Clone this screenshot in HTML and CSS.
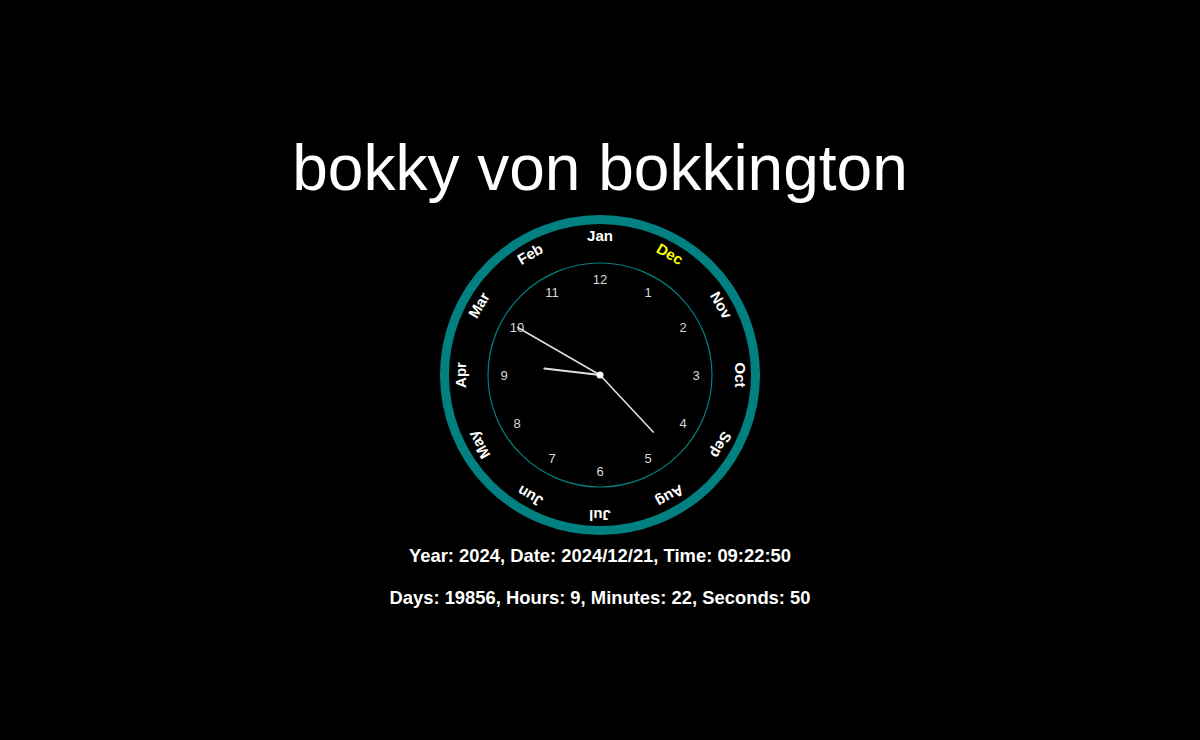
FILE: index.html
```html
<!DOCTYPE html>
<html lang="en">
<head>
<meta charset="utf-8">
<title>bokky von bokkington</title>
<link rel="stylesheet" href="styles.css">
</head>
<body>
<main class="page">
  <h1 class="title">bokky von bokkington</h1>
  <svg class="clock" width="320" height="320" viewBox="0 0 320 320">
    <circle class="ring" cx="160" cy="160" r="155.5"/>
    <circle class="face" cx="160" cy="160" r="112"/>
    <g class="months">
      <text x="160" y="20" transform="rotate(0 160 160)">Jan</text>
      <text x="160" y="20" transform="rotate(-30 160 160)">Feb</text>
      <text x="160" y="20" transform="rotate(-60 160 160)">Mar</text>
      <text x="160" y="20" transform="rotate(-90 160 160)">Apr</text>
      <text x="160" y="20" transform="rotate(-120 160 160)">May</text>
      <text x="160" y="20" transform="rotate(-150 160 160)">Jun</text>
      <text x="160" y="20" transform="rotate(-180 160 160)">Jul</text>
      <text x="160" y="20" transform="rotate(-210 160 160)">Aug</text>
      <text x="160" y="20" transform="rotate(-240 160 160)">Sep</text>
      <text x="160" y="20" transform="rotate(-270 160 160)">Oct</text>
      <text x="160" y="20" transform="rotate(-300 160 160)">Nov</text>
      <text class="current" x="160" y="20" transform="rotate(-330 160 160)">Dec</text>
    </g>
    <g class="hours">
      <text x="208" y="77">1</text>
      <text x="243" y="112">2</text>
      <text x="256" y="160">3</text>
      <text x="243" y="208">4</text>
      <text x="208" y="243">5</text>
      <text x="160" y="256">6</text>
      <text x="112" y="243">7</text>
      <text x="77" y="208">8</text>
      <text x="64" y="160">9</text>
      <text x="77" y="112">10</text>
      <text x="112" y="77">11</text>
      <text x="160" y="64">12</text>
    </g>
    <line class="hand hour" x1="160" y1="160" x2="160" y2="104" transform="rotate(276.6 160 160)"/>
    <line class="hand minute" x1="160" y1="160" x2="160" y2="82" transform="rotate(137 160 160)"/>
    <line class="hand second" x1="160" y1="160" x2="160" y2="65" transform="rotate(300 160 160)"/>
    <circle class="pin" cx="160" cy="160" r="3.5"/>
  </svg>
  <div class="info">
    <p>Year: 2024, Date: 2024/12/21, Time: 09:22:50</p>
    <p>Days: 19856, Hours: 9, Minutes: 22, Seconds: 50</p>
  </div>
</main>
</body>
</html>
```

FILE: styles.css
```css
html, body {
  margin: 0;
  padding: 0;
  background: #000;
}

body {
  font-family: "Liberation Sans", Arial, sans-serif;
  color: #fff;
  width: 1200px;
  height: 740px;
  overflow: hidden;
}

.page {
  display: flex;
  flex-direction: column;
  align-items: center;
  padding-top: 131px;
}

.title {
  margin: 0;
  font-size: 64px;
  line-height: 74px;
  font-weight: normal;
  color: #fff;
}

.clock {
  display: block;
  margin-top: 10px;
}

.ring {
  fill: none;
  stroke: #008080;
  stroke-width: 9;
}

.face {
  fill: none;
  stroke: #008080;
  stroke-width: 1.2;
}

.months text {
  font-family: "Liberation Sans", Arial, sans-serif;
  font-size: 15px;
  font-weight: bold;
  fill: #fff;
  text-anchor: middle;
  dominant-baseline: central;
}

.months text.current {
  fill: #ffff00;
}

.hours text {
  font-family: "Liberation Sans", Arial, sans-serif;
  font-size: 13px;
  fill: #d8d8d8;
  text-anchor: middle;
  dominant-baseline: central;
}

.hand {
  stroke: #e0e0e0;
  stroke-linecap: round;
}

.hour {
  stroke-width: 2;
}

.minute {
  stroke-width: 1.6;
}

.second {
  stroke-width: 1.5;
}

.pin {
  fill: #fff;
}

.info {
  margin-top: 10px;
  display: flex;
  flex-direction: column;
  align-items: center;
  gap: 21px;
}

.info p {
  margin: 0;
  font-size: 18.4px;
  line-height: 21px;
  font-weight: bold;
  color: #fff;
}
```
